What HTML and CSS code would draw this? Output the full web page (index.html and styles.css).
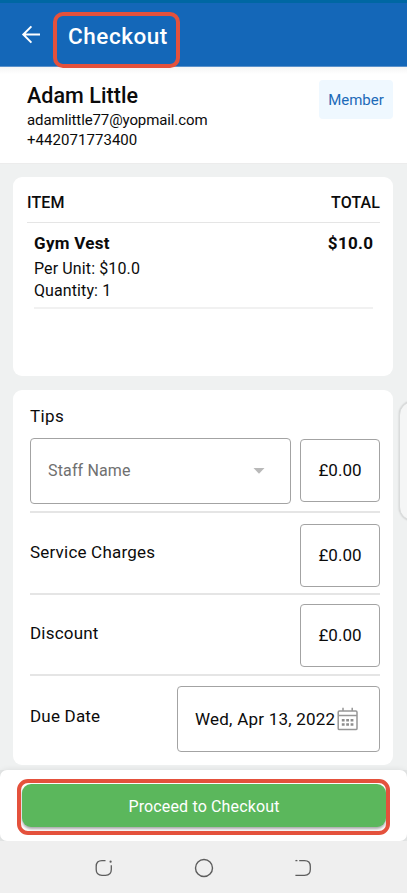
FILE: index.html
```html
<!DOCTYPE html>
<html lang="en">
<head>
<meta charset="utf-8">
<title>Checkout</title>
<link rel="stylesheet" href="styles.css">
</head>
<body>
<div class="screen">
  <header class="appbar">
    <svg class="back" width="20" height="20" viewBox="0 0 20 20" fill="none" stroke="#fff" stroke-width="2"><path d="M19 10.5H2.4M10.4 2.4 2.3 10.5l8.1 8.1"/></svg>
    <h1 class="title">Checkout</h1>
  </header>

  <section class="customer">
    <div class="who">
      <h2 class="name">Adam Little</h2>
      <p class="email">adamlittle77@yopmail.com</p>
      <p class="phone">+442071773400</p>
    </div>
    <span class="badge">Member</span>
  </section>

  <main class="content">
    <section class="card items">
      <div class="items-head"><span>ITEM</span><span class="total">TOTAL</span></div>
      <div class="item">
        <div class="item-top"><span class="item-name">Gym Vest</span><span class="price">$10.0</span></div>
        <p class="unit">Per Unit: $10.0</p>
        <p class="qty">Quantity: 1</p>
      </div>
    </section>

    <section class="card charges">
      <p class="tips">Tips</p>
      <div class="row row-tips">
        <div class="select"><span class="placeholder">Staff Name</span><svg width="12" height="6" viewBox="0 0 12 6"><path d="M.5 0h11L6 5.8z" fill="#b9b9b9"/></svg></div>
        <div class="amount">£0.00</div>
      </div>
      <div class="row row-service"><span class="label service">Service Charges</span><div class="amount">£0.00</div></div>
      <div class="row row-discount"><span class="label discount">Discount</span><div class="amount">£0.00</div></div>
      <div class="row row-date">
        <span class="label due">Due Date</span>
        <div class="date"><span class="date-text">Wed, Apr 13, 2022</span>
          <svg width="22" height="24" viewBox="0 0 22 24" fill="none" stroke="#969696" stroke-width="1.5"><rect x="1.2" y="4" width="18.8" height="18.6" rx="1.2"/><path d="M1.2 8.6H20M6 .7V4M15.2 .7V4"/><g fill="#8e8e8e" stroke="none"><path d="M4.8 12h2.8v2.6H4.8zM9.2 12H12v2.6H9.2zM13.6 12h2.8v2.6h-2.8zM4.8 16.2h2.8v2.6H4.8zM9.2 16.2H12v2.6H9.2zM13.6 16.2h2.8v2.6h-2.8z"/></g></svg>
        </div>
      </div>
    </section>
  </main>

  <footer class="footer"><div class="footer-panel"><button class="proceed"><span>Proceed to Checkout</span></button></div></footer>

  <nav class="navbar">
    <svg width="18" height="18" viewBox="0 0 18 18" fill="none" stroke="#5d5d5d" stroke-width="1.3"><path d="M10.5 1.6H7Q1.2 1.6 1.2 7.4v3.1Q1.2 16.3 7 16.3h3.5q5.8 0 5.8-5.8V6.2"/><circle cx="15.6" cy="2.7" r="1.1" fill="#5d5d5d" stroke="none"/></svg>
    <svg width="20" height="20" viewBox="0 0 20 20" fill="none" stroke="#5d5d5d" stroke-width="1.4"><circle cx="10" cy="10" r="8.5"/></svg>
    <svg width="18" height="18" viewBox="0 0 18 18" fill="none" stroke="#5d5d5d" stroke-width="1.3"><path d="M5.2 1.6h5.3q5.8 0 5.8 5.8v3.1q0 5.8-5.8 5.8H1.4"/><path d="M1.4 1.6h2"/></svg>
  </nav>
  <div class="edge-handle"></div>
  <div class="mark mark-title"></div>
  <div class="mark mark-button"></div>
</div>
</body>
</html>
```
FILE: styles.css
```css
* { box-sizing: border-box; }
body, h1, h2, p { margin: 0; }
body { font-family: Roboto, "Liberation Sans", sans-serif; color: #0b0b0b; background: #eff1f1; }
.screen { position: relative; width: 407px; height: 893px; overflow: hidden; display: flex; flex-direction: column; }
svg { display: block; flex: none; }
span, h1, h2, p { white-space: nowrap; }

.appbar { height: 67px; flex: none; background: #1467b8; border-top: 3px solid #0067a3; border-bottom: 1px solid #5a91ca; display: flex; align-items: flex-start; padding-left: 21px; }
.back { margin-top: 21px; }
.title { margin: 20px 0 0 27px; color: #fff; font-size: 22.5px; line-height: 26px; font-weight: 500; letter-spacing: .55px; }

.customer { height: 97px; flex: none; background: linear-gradient(#f4f4f4, #fff 7px); border-bottom: 1px solid #ececec; display: flex; justify-content: space-between; padding: 13px 14px 0 27px; }
.name { font-size: 21.5px; line-height: 32px; font-weight: 500; letter-spacing: .05px; }
.email { font-size: 15px; line-height: 17px; letter-spacing: -.11px; }
.phone { font-size: 15px; line-height: 23px; letter-spacing: .05px; }
.badge { width: 74px; height: 39px; border-radius: 4px; background: #eff8ff; color: #1c6ab8; font-size: 15px; line-height: 40px; text-align: center; }

.content { height: 606px; flex: none; padding: 13px 14px 0 13px; display: flex; flex-direction: column; gap: 14px; }
.card { background: #fff; border-radius: 9px; }
.items { height: 199px; padding: 0 13px 0 14px; }
.items-head { height: 46px; border-bottom: 1px solid #e5e5e5; display: flex; justify-content: space-between; padding-top: 1px; font-size: 16px; line-height: 49px; font-weight: 500; letter-spacing: .1px; }
.item { margin: 0 7px; height: 86px; border-bottom: 2px solid #f1f1f1; padding-top: 8px; }
.item-top { display: flex; justify-content: space-between; font-size: 17px; line-height: 24px; font-weight: 700; letter-spacing: .3px; }
.price { margin-right: -.3px; }
.unit { font-size: 16px; line-height: 27px; letter-spacing: .12px; }
.qty { font-size: 16px; line-height: 18px; letter-spacing: .1px; }

.charges { height: 375px; padding: 0 13px 0 17px; font-size: 17px; }
.tips { height: 48px; line-height: 52px; letter-spacing: .4px; }
.row { display: flex; justify-content: space-between; border-bottom: 2px solid #e5e5e5; }
.row-tips { height: 75px; }
.row-service { height: 82px; padding-top: 11px; }
.row-discount { height: 81px; padding-top: 9px; }
.row-date { height: 89px; padding-top: 10px; border: 0; }
.select, .amount, .date { border: 1px solid #a3a3a3; border-radius: 4px; }
.select { width: 261px; height: 66px; display: flex; align-items: center; justify-content: space-between; padding: 0 25px 0 17px; color: #707070; font-size: 16px; letter-spacing: .15px; }
.placeholder { margin-top: -1px; }
.amount { width: 80px; height: 63px; line-height: 61px; text-align: center; font-size: 17px; }
.row-tips .amount { margin-top: 1px; }
.label { line-height: 58px; letter-spacing: .2px; }
.service { line-height: 56px; }
.discount { line-height: 59px; }
.due { line-height: 60px; }
.date { width: 203px; height: 66px; display: flex; align-items: center; padding-left: 17px; }
.date-text { letter-spacing: .23px; }
.date svg { margin-left: 2px; }

.footer { height: 71px; flex: none; background: #e6e8e8; }
.footer-panel { height: 71px; padding: 14px 21px 0 22px; background: #fff; border-radius: 7px; box-shadow: 0 0 6px rgba(0, 0, 0, .09); }
.proceed { display: block; width: 100%; height: 43px; padding: 0; border: 0; border-radius: 9px; background: #5bb75c; color: #fff; font: 16px/45px Roboto, "Liberation Sans", sans-serif; letter-spacing: .15px; box-shadow: 0 2px 3px rgba(0, 0, 0, .35); }

.navbar { height: 52px; flex: none; background: #efefef; display: flex; justify-content: space-between; align-items: center; padding: 2px 95px 0 95px; }

.edge-handle { position: absolute; left: 399px; top: 401px; width: 30px; height: 120px; border: 1px solid #dadcdc; border-radius: 14px; background: #f5f6f6; box-shadow: 0 0 2px rgba(0, 0, 0, .2); }
.mark { position: absolute; border: 4px solid #e4513c; }
.mark-title { left: 53px; top: 12px; width: 127px; height: 56px; border-radius: 10px; }
.mark-button { left: 17px; top: 779px; width: 373px; height: 56px; border-radius: 11px; }
```
